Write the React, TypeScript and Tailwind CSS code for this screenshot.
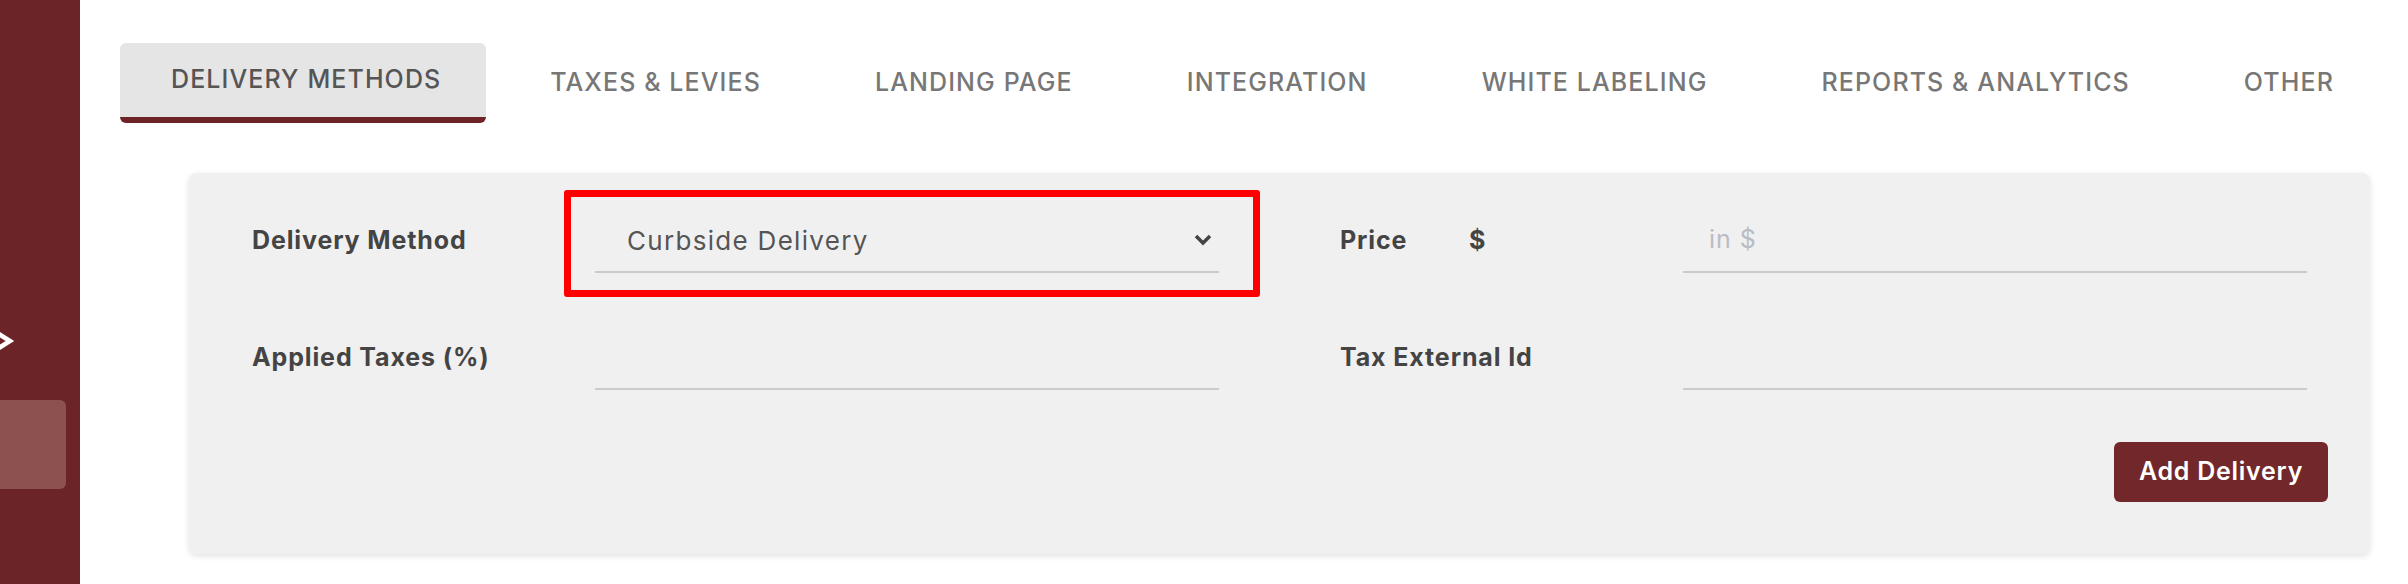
import React from "react";

const tabs = [
  "DELIVERY METHODS",
  "TAXES & LEVIES",
  "LANDING PAGE",
  "INTEGRATION",
  "WHITE LABELING",
  "REPORTS & ANALYTICS",
  "OTHER",
];

function Sidebar() {
  return (
    <aside className="w-[80px] shrink-0 bg-[#6b2427] flex flex-col pt-[328px]">
      <svg width="16" height="26" viewBox="0 0 16 26" className="block">
        <path d="M-6 3 L10 13 L-6 23" fill="none" stroke="#fff" strokeWidth="4.5" />
      </svg>
      <div className="mt-[46px] w-[66px] h-[89px] rounded-r-[6px] bg-[#8d5150]" />
    </aside>
  );
}

function Field({ label, extra, children }: { label: string; extra?: string; children: React.ReactNode }) {
  return (
    <div className="flex items-center">
      <div className="w-[343px] shrink-0 flex items-center text-[25px] font-bold text-[#444] tracking-[0.035em]">
        {extra ? (
          <>
            <span className="w-[129px]">{label}</span>
            <span>{extra}</span>
          </>
        ) : (
          <span>{label}</span>
        )}
      </div>
      {children}
    </div>
  );
}

export default function App() {
  return (
    <div
      className="flex w-[2408px] h-[584px] overflow-hidden bg-white"
      style={{ fontFamily: "Inter, 'Noto Sans', sans-serif" }}
    >
      <Sidebar />
      <main className="flex-1 min-w-0 pl-[40px] pt-[43px]">
        <nav className="flex gap-[14px]">
          {tabs.map((t, i) => (
            <div
              key={t}
              className={
                i === 0
                  ? "shrink-0 whitespace-nowrap h-[80px] pl-[51px] pr-[45px] flex items-center rounded-[6px] bg-[#e5e5e5] border-b-[6px] border-[#6e2426] text-[25px] font-medium text-[#555] tracking-[0.044em]"
                  : "shrink-0 whitespace-nowrap h-[80px] px-[50px] flex items-center text-[25px] font-medium text-[#777] tracking-[0.044em]"
              }
            >
              {t}
            </div>
          ))}
        </nav>

        <section className="ml-[69px] mt-[50px] w-[2181px] rounded-[8px] bg-[#f0f0f0] shadow-[0_2px_6px_rgba(0,0,0,0.12)] px-[63px] pt-[36px] pb-[52px]">
          <div className="grid grid-cols-2 gap-x-[121px] gap-y-[53px]">
            <Field label="Delivery Method">
              <div className="relative flex-1">
                <div className="h-[64px] flex items-center justify-between pl-[32px] pr-[6px] border-b-2 border-[#cbcbcb]">
                  <span className="text-[26px] text-[#555] tracking-[0.05em]">Curbside Delivery</span>
                  <svg width="20" height="14" viewBox="0 0 20 14">
                    <path d="M3 3 L10 10 L17 3" fill="none" stroke="#444" strokeWidth="3.5" />
                  </svg>
                </div>
                <div className="absolute -left-[31px] -right-[41px] -top-[19px] -bottom-[24px] border-[7px] border-[#ff0000] rounded-[3px] pointer-events-none" />
              </div>
            </Field>
            <Field label="Price" extra="$">
              <div className="flex-1 h-[64px] flex items-center pl-[26px] border-b-2 border-[#cbcbcb]">
                <span className="text-[25px] text-[#b9bcc3] tracking-[0.04em]">in $</span>
              </div>
            </Field>
            <Field label="Applied Taxes (%)">
              <div className="flex-1 h-[64px] border-b-2 border-[#cbcbcb]" />
            </Field>
            <Field label="Tax External Id">
              <div className="flex-1 h-[64px] border-b-2 border-[#cbcbcb]" />
            </Field>
          </div>
          <div className="flex justify-end mt-[52px] -mr-[21px]">
            <button className="h-[60px] w-[214px] rounded-[6px] bg-[#72272a] text-white text-[25px] font-semibold tracking-[0.03em]">
              Add Delivery
            </button>
          </div>
        </section>
      </main>
    </div>
  );
}
